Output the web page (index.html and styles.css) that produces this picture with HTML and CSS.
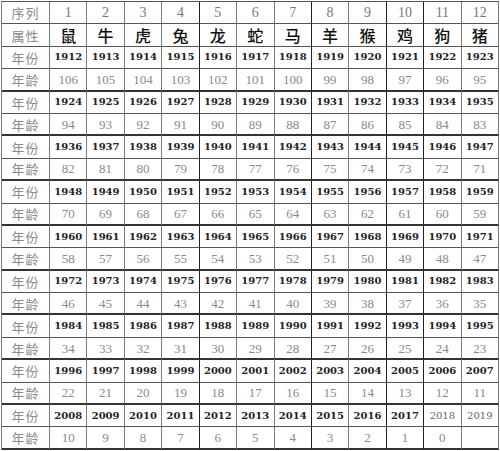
FILE: index.html
```html
<!DOCTYPE html>
<html lang="zh">
<head>
<meta charset="utf-8">
<link rel="stylesheet" href="styles.css">
</head>
<body>
<div class="zodiac">
  <div class="row r-head"><div class="lbl">序列</div><div>1</div><div>2</div><div>3</div><div>4</div><div>5</div><div>6</div><div>7</div><div>8</div><div>9</div><div>10</div><div>11</div><div>12</div></div>
  <div class="row r-animal"><div class="lbl">属性</div><div>鼠</div><div>牛</div><div>虎</div><div>兔</div><div>龙</div><div>蛇</div><div>马</div><div>羊</div><div>猴</div><div>鸡</div><div>狗</div><div>猪</div></div>
  <div class="row r-year"><div class="lbl">年份</div><div>1912</div><div>1913</div><div>1914</div><div>1915</div><div>1916</div><div>1917</div><div>1918</div><div>1919</div><div>1920</div><div>1921</div><div>1922</div><div>1923</div></div>
  <div class="row r-age"><div class="lbl">年龄</div><div>106</div><div>105</div><div>104</div><div>103</div><div>102</div><div>101</div><div>100</div><div>99</div><div>98</div><div>97</div><div>96</div><div>95</div></div>
  <div class="row r-year"><div class="lbl">年份</div><div>1924</div><div>1925</div><div>1926</div><div>1927</div><div>1928</div><div>1929</div><div>1930</div><div>1931</div><div>1932</div><div>1933</div><div>1934</div><div>1935</div></div>
  <div class="row r-age"><div class="lbl">年龄</div><div>94</div><div>93</div><div>92</div><div>91</div><div>90</div><div>89</div><div>88</div><div>87</div><div>86</div><div>85</div><div>84</div><div>83</div></div>
  <div class="row r-year"><div class="lbl">年份</div><div>1936</div><div>1937</div><div>1938</div><div>1939</div><div>1940</div><div>1941</div><div>1942</div><div>1943</div><div>1944</div><div>1945</div><div>1946</div><div>1947</div></div>
  <div class="row r-age"><div class="lbl">年龄</div><div>82</div><div>81</div><div>80</div><div>79</div><div>78</div><div>77</div><div>76</div><div>75</div><div>74</div><div>73</div><div>72</div><div>71</div></div>
  <div class="row r-year"><div class="lbl">年份</div><div>1948</div><div>1949</div><div>1950</div><div>1951</div><div>1952</div><div>1953</div><div>1954</div><div>1955</div><div>1956</div><div>1957</div><div>1958</div><div>1959</div></div>
  <div class="row r-age"><div class="lbl">年龄</div><div>70</div><div>69</div><div>68</div><div>67</div><div>66</div><div>65</div><div>64</div><div>63</div><div>62</div><div>61</div><div>60</div><div>59</div></div>
  <div class="row r-year"><div class="lbl">年份</div><div>1960</div><div>1961</div><div>1962</div><div>1963</div><div>1964</div><div>1965</div><div>1966</div><div>1967</div><div>1968</div><div>1969</div><div>1970</div><div>1971</div></div>
  <div class="row r-age"><div class="lbl">年龄</div><div>58</div><div>57</div><div>56</div><div>55</div><div>54</div><div>53</div><div>52</div><div>51</div><div>50</div><div>49</div><div>48</div><div>47</div></div>
  <div class="row r-year"><div class="lbl">年份</div><div>1972</div><div>1973</div><div>1974</div><div>1975</div><div>1976</div><div>1977</div><div>1978</div><div>1979</div><div>1980</div><div>1981</div><div>1982</div><div>1983</div></div>
  <div class="row r-age"><div class="lbl">年龄</div><div>46</div><div>45</div><div>44</div><div>43</div><div>42</div><div>41</div><div>40</div><div>39</div><div>38</div><div>37</div><div>36</div><div>35</div></div>
  <div class="row r-year"><div class="lbl">年份</div><div>1984</div><div>1985</div><div>1986</div><div>1987</div><div>1988</div><div>1989</div><div>1990</div><div>1991</div><div>1992</div><div>1993</div><div>1994</div><div>1995</div></div>
  <div class="row r-age"><div class="lbl">年龄</div><div>34</div><div>33</div><div>32</div><div>31</div><div>30</div><div>29</div><div>28</div><div>27</div><div>26</div><div>25</div><div>24</div><div>23</div></div>
  <div class="row r-year"><div class="lbl">年份</div><div>1996</div><div>1997</div><div>1998</div><div>1999</div><div>2000</div><div>2001</div><div>2002</div><div>2003</div><div>2004</div><div>2005</div><div>2006</div><div>2007</div></div>
  <div class="row r-age"><div class="lbl">年龄</div><div>22</div><div>21</div><div>20</div><div>19</div><div>18</div><div>17</div><div>16</div><div>15</div><div>14</div><div>13</div><div>12</div><div>11</div></div>
  <div class="row r-year"><div class="lbl">年份</div><div>2008</div><div>2009</div><div>2010</div><div>2011</div><div>2012</div><div>2013</div><div>2014</div><div>2015</div><div>2016</div><div>2017</div><div class="faint">2018</div><div class="faint">2019</div></div>
  <div class="row r-age"><div class="lbl">年龄</div><div>10</div><div>9</div><div>8</div><div>7</div><div>6</div><div>5</div><div>4</div><div>3</div><div>2</div><div>1</div><div>0</div><div></div></div>
</div>
</body>
</html>
```

FILE: styles.css
```css
html, body {
  margin: 0;
  padding: 0;
  background: #ffffff;
}

.zodiac {
  margin: 1px 0 0 1px;
  width: 498px;
  display: grid;
  grid-template-rows: repeat(20, 22.4px);
  border-top: 1px solid #555555;
  border-left: 1px solid #7a7a7a;
  box-sizing: border-box;
}

.row {
  display: grid;
  grid-template-columns: 48px repeat(12, 1fr);
}

.row > div {
  box-sizing: border-box;
  display: flex;
  align-items: center;
  justify-content: center;
  border-right: 1px solid #7a7a7a;
  border-bottom: 1px solid #555555;
  line-height: 1;
  white-space: nowrap;
}

.row > div:nth-child(5),
.row > div:nth-child(8),
.row > div:nth-child(10),
.row > div:nth-child(11) {
  border-right-color: #222222;
}

.r-age > div {
  border-bottom: 2px solid #333333;
}

.row > .lbl {
  font-family: "Noto Sans CJK SC", sans-serif;
  font-weight: 400;
  font-size: 13px;
  color: #8a8a8a;
  letter-spacing: 1px;
}

.r-head > div {
  font-family: "Liberation Serif", serif;
  font-size: 14px;
  color: #777777;
}

.r-animal > div {
  font-family: "Noto Sans CJK SC", sans-serif;
  font-weight: 500;
  font-size: 16px;
  color: #111111;
}

.r-year > div {
  font-family: "DejaVu Serif", serif;
  font-weight: 700;
  font-size: 10px;
  color: #222222;
}

.r-year > div.faint {
  color: #666666;
  font-weight: 400;
}

.r-age > div {
  font-family: "Liberation Serif", serif;
  font-size: 13px;
  color: #8a8a8a;
}
```
